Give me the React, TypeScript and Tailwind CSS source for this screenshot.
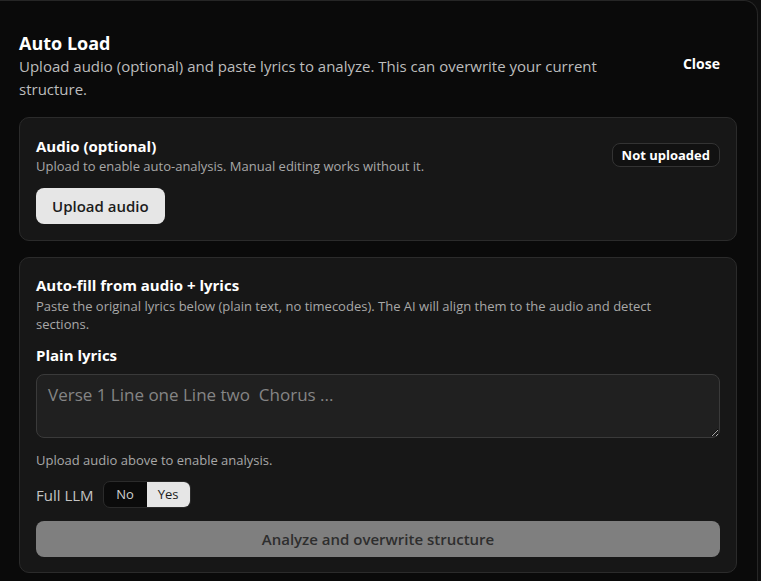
import { useState } from "react";

export default function App() {
  const [fullLlm, setFullLlm] = useState<boolean>(true);
  const [lyrics, setLyrics] = useState<string>("");

  return (
    <div
      className="min-h-[581px] w-full overflow-hidden bg-[#0f0f0f] text-[#ededed]"
      style={{ fontFamily: '"Segoe UI", "Open Sans", sans-serif' }}
    >
      {/* Dialog */}
      <div className="ml-[-2px] h-[600px] w-[760px] rounded-tr-[14px] border-t border-r border-[#262626] bg-[#0a0a0a] pl-[21px] pr-[20px] pt-[30px]">
        {/* Header */}
        <div className="flex items-start justify-between">
          <div className="w-[610px]">
            <h2 className="text-[18px] font-bold leading-[24px] text-white">Auto Load</h2>
            <p className="text-[15px] leading-[23px] text-[#bdbdbd]">
              Upload audio (optional) and paste lyrics to analyze. This can overwrite your current structure.
            </p>
          </div>
          <button className="mr-[17px] mt-[22px] text-[14px] font-bold text-white">Close</button>
        </div>

        {/* Audio card */}
        <div className="mt-[16px] rounded-[10px] border border-[#2b2b2b] bg-[#171717] px-4 pb-4 pt-[18px]">
          <div className="flex items-start justify-between">
            <div>
              <div className="text-[15px] font-bold leading-[20px] text-white">Audio (optional)</div>
              <div className="mt-[1px] text-[13px] leading-[18px] text-[#a8a8a8]">
                Upload to enable auto-analysis. Manual editing works without it.
              </div>
            </div>
            <span className="mt-[7px] rounded-[8px] border border-[#333] bg-[#111] px-[9px] py-[2px] text-[13px] font-bold leading-[18px] text-white">
              Not uploaded
            </span>
          </div>
          <button className="mt-[13px] h-[36px] rounded-[8px] bg-[#e6e6e6] px-[16px] text-[15px] font-semibold text-[#1c1c1c]">
            Upload audio
          </button>
        </div>

        {/* Auto-fill card */}
        <div className="mt-[16px] rounded-[10px] border border-[#2b2b2b] bg-[#171717] px-4 pb-[15px] pt-[17px]">
          <div className="text-[15px] font-bold leading-[20px] text-white">Auto-fill from audio + lyrics</div>
          <div className="mt-[2px] max-w-[640px] text-[13px] leading-[18px] text-[#a8a8a8]">
            Paste the original lyrics below (plain text, no timecodes). The AI will align them to the audio and detect sections.
          </div>
          <div className="mt-[12px] text-[15px] font-bold leading-[20px] text-white">Plain lyrics</div>
          <textarea
            value={lyrics}
            onChange={(e) => setLyrics(e.target.value)}
            placeholder="Verse 1 Line one Line two  Chorus ..."
            className="mt-[9px] block h-[64px] w-full resize-y rounded-[8px] border border-[#3a3a3a] bg-[#202020] px-[11px] py-[8px] text-[17px] leading-[24px] text-white placeholder:text-[#858585] outline-none"
          />
          <div className="mt-[13px] text-[13px] leading-[18px] text-[#a8a8a8]">Upload audio above to enable analysis.</div>
          <div className="mt-[12px] flex h-[27px] items-center gap-[9px]">
            <span className="text-[15px] leading-[20px] text-[#c4c4c4]">Full LLM</span>
            <div className="flex h-[27px] overflow-hidden rounded-[7px] border border-[#2b2b2b] bg-[#0b0b0b]">
              <button
                onClick={() => setFullLlm(false)}
                className={`w-[43px] text-[13px] ${!fullLlm ? "bg-[#e6e6e6] text-[#1c1c1c]" : "text-[#d0d0d0]"}`}
              >
                No
              </button>
              <button
                onClick={() => setFullLlm(true)}
                className={`w-[43px] text-[13px] ${fullLlm ? "bg-[#e6e6e6] text-[#1c1c1c]" : "text-[#d0d0d0]"}`}
              >
                Yes
              </button>
            </div>
          </div>
          <button
            disabled
            className="mt-[13px] h-[36px] w-full rounded-[8px] bg-[#7f7f7f] text-[15px] font-semibold text-[#2e2e2e]"
          >
            Analyze and overwrite structure
          </button>
        </div>
      </div>
    </div>
  );
}
